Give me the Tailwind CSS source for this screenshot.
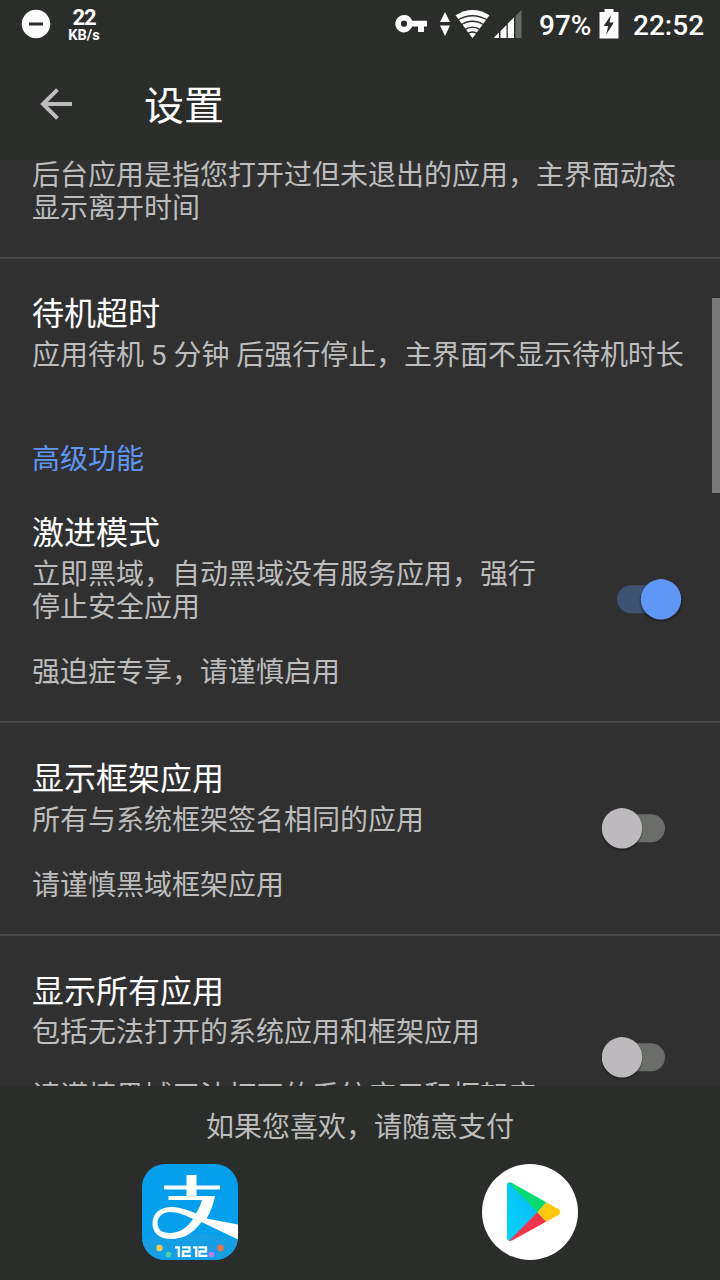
<!DOCTYPE html>
<html lang="zh-CN">
<head>
<meta charset="utf-8">
<title>设置</title>
<script src="https://cdn.jsdelivr.net/npm/@tailwindcss/browser@4"></script>
</head>
<body class="w-[720px] h-[1280px] overflow-hidden bg-[#303030] font-['Roboto','Noto_Sans_CJK_SC',sans-serif] text-white">
<div class="relative flex flex-col w-[720px] h-[1280px] overflow-hidden">
  <header class="h-[160px] shrink-0 bg-[#2b2d2a]">
    <div class="flex h-12 items-center pl-[21px] pr-4">
      <svg class="size-[30px] shrink-0" viewBox="0 0 30 30"><circle cx="15" cy="15" r="14.3" fill="#fff"/><path d="M8 15h14" stroke="#2b2d2a" stroke-width="3"/></svg>
      <div class="ml-[17px] w-8 shrink-0 flex flex-col items-center font-bold pt-[4px]">
        <span class="text-[22px] leading-[19px] tracking-[-1px]">22</span>
        <span class="text-[14.5px] leading-[17px]">KB/s</span>
      </div>
      <svg class="w-[145px] h-12 ml-[294px] shrink-0" viewBox="394 0 145 48" fill="#fff">
        <path fill-rule="evenodd" d="M404 15a8.7 8.7 0 1 0 8.2 11.6H418V32h6v-5.4h3v-5.8h-14.8A8.7 8.7 0 0 0 404 15Zm0 5.6a3.1 3.1 0 1 1 0 6.2 3.1 3.1 0 0 1 0-6.2Z"/>
        <path d="M445 12l5 10h-10zM445 36l5-10.500h-10z"/>
        <path d="M455.500 15.300Q472.500 4.500 489.500 15.300L472.500 38.300Z"/>
        <g fill="none" stroke="#2b2d2a" stroke-width="1.300"><path d="M457 20.500q15.500-9.500 31 0M460 25.500q12.500-8.500 25 0M464 30.300q8.500-6.500 17 0M467 34q5.500-4 11 0"/></g>
        <path d="M494 38v-.5l5-5V38zM500.500 38v-7l6-6v13zM507.800 38V23.500l6.200-6.200V38z"/>
        <path d="M515.500 38V16l6-6v28z" fill="#686a68"/>
      </svg>
      <div class="flex items-center text-[28px] leading-8 font-medium pt-[3px]">
        <span class="w-[60px]">97%</span>
        <svg class="w-5 h-[30px] -mt-[3px] mr-[14px]" viewBox="0 0 20 30"><path d="M5.500 0h9v3H19.500v26.500H.5V3h5z" fill="#fff"/><path d="M12 6L4.700 17h4.600L7 26 14.800 13.500H10.500z" fill="#2b2d2a"/></svg>
        <span class="w-[71px]">22:52</span>
      </div>
    </div>
    <div class="flex h-28 items-center pl-10">
      <svg class="size-8" viewBox="0 0 32 32" fill="none" stroke="#c0bdc0" stroke-width="4"><path d="M32 16H3.500M17.500 1.700L3 16l14.500 14.300"/></svg>
      <h1 class="ml-[72px] pt-[5px] text-[40px] leading-[48px]">设置</h1>
    </div>
  </header>

  <main class="h-[926px] shrink-0 overflow-hidden text-[28px] leading-[32.800px] text-[#bdbdbd]">
    <div class="h-[99px] px-8 border-b-2 border-[#484848]"><p>后台应用是指您打开过但未退出的应用，主界面动态<br>显示离开时间</p></div>
    <section class="h-[147px] px-8 pt-[30px]">
      <h2 class="text-[32px] leading-[50px] text-white">待机超时</h2>
      <p class="pt-px whitespace-nowrap tracking-[-0.03px]">应用待机 5 分钟 后强行停止，主界面不显示待机时长</p>
    </section>
    <h3 class="h-[102px] px-8 pt-[38px] text-[#5e97f6]">高级功能</h3>
    <section class="flex h-[215px] px-8 border-b-2 border-[#484848]">
      <div class="w-[570px] shrink-0">
        <h2 class="text-[32px] leading-[50px] text-white">激进模式</h2>
        <p class="pt-px">立即黑域，自动黑域没有服务应用，强行<br>停止安全应用<br><br>强迫症专享，请谨慎启用</p>
      </div>
      <svg class="w-24 h-[184px] shrink-0" viewBox="0 0.7 96 184"><rect x="15" y="78" width="56" height="28" rx="14" fill="#3e5372"/><circle cx="59" cy="93.500" r="22" fill="#000" fill-opacity=".12"/><circle cx="59" cy="93" r="21" fill="#000" fill-opacity=".15"/><circle cx="59" cy="92" r="20.200" fill="#5e97f6"/></svg>
    </section>
    <section class="flex h-[213px] px-8 pt-[31px] border-b-2 border-[#484848]">
      <div class="w-[570px] shrink-0">
        <h2 class="text-[32px] leading-[50px] text-white">显示框架应用</h2>
        <p class="pt-[0.5px]">所有与系统框架签名相同的应用<br><br>请谨慎黑域框架应用</p>
      </div>
      <svg class="-mt-px w-24 h-[149px] shrink-0" viewBox="0 0.7 96 149"><rect x="7" y="62" width="56" height="28" rx="14" fill="#6b6d6a"/><circle cx="20" cy="78" r="21" fill="#000" fill-opacity=".12"/><circle cx="20" cy="77" r="20.500" fill="#000" fill-opacity=".2"/><circle cx="20" cy="76" r="20.200" fill="#bdbabd"/></svg>
    </section>
    <section class="flex h-[213px] px-8 pt-[31px]">
      <div class="w-[570px] shrink-0">
        <h2 class="text-[32px] leading-[50px] text-white">显示所有应用</h2>
        <p class="leading-8">包括无法打开的系统应用和框架应用<br><br>请谨慎黑域无法打开的系统应用和框架应</p>
      </div>
      <svg class="-mt-px w-24 h-[149px] shrink-0" viewBox="0 -0.3 96 149"><rect x="7" y="77" width="56" height="28" rx="14" fill="#6b6d6a"/><circle cx="20" cy="93" r="21" fill="#000" fill-opacity=".12"/><circle cx="20" cy="92" r="20.500" fill="#000" fill-opacity=".2"/><circle cx="20" cy="91" r="20.200" fill="#bdbabd"/></svg>
    </section>
  </main>

  <footer class="h-[194px] shrink-0 bg-[#2b2d2a] pt-[25px] text-center text-[28px] leading-[33px] text-[#bdbdbd]">
    <p>如果您喜欢，请随意支付</p>
    <div class="mt-[20px] flex justify-between px-[142px]">
      <svg class="size-24" viewBox="0 0 96 96">
        <defs><clipPath id="tile"><rect width="96" height="96" rx="23"/></clipPath></defs>
        <g clip-path="url(#tile)">
          <rect width="96" height="96" fill="#04a0ee"/>
          <path d="M0 76Q48 62 96 76V96H0Z" fill="#149fe4"/>
          <path d="M22 21.500h22.500V11h10v10.500H78v4H54.500v6.500H73q-2.500 13-8.500 22.500L96 60.500v15L59.500 58C50 71 39 75.500 28 75 15 74.500 10 67 10.500 58.500 11 48.500 19 43 30 43c9 .3 17 3.500 24 6.500q4-6 6-13.500H26.500v-4h18v-6.500H22z" fill="#fff"/>
          <path d="M51 55c-7-3.500-15-7-23-7-8 .5-12.500 5-12.500 11 0 7 5 10 12.500 10 9 0 17-5 23-14z" fill="#04a0ee"/>
          <g fill="none" stroke="#fff" stroke-width="2.300"><path d="M33 83.300h3.800V93M40 83.300h7.500v4.200h-6.500v4.400h8M51 83.300h3.300V93M56.500 83.300h7.500v4.200h-6.500v4.400h8"/></g>
          <circle cx="17.500" cy="84" r="3.200" fill="#f2c84b"/><circle cx="26.500" cy="90.500" r="2.800" fill="#4ed3a3"/><circle cx="69.500" cy="90.500" r="2.800" fill="#c37df0"/><circle cx="78.500" cy="84" r="3.400" fill="#e3714d"/>
        </g>
      </svg>
      <svg class="size-24" viewBox="0 0 96 96">
        <defs>
          <linearGradient id="blue" x1="1" y1="0" x2="0" y2="1"><stop offset="0" stop-color="#05b5f5"/><stop offset="1" stop-color="#05dafd"/></linearGradient>
          <clipPath id="play"><path d="M25 21Q25.500 17 30 19L76.500 45Q80 48 76.500 51L30 76.500Q25.500 78 25 74Z"/></clipPath>
        </defs>
        <circle cx="48" cy="48" r="48" fill="#fff"/>
        <g clip-path="url(#play)">
          <path d="M20 10L56 48.300 20 85z" fill="url(#blue)"/>
          <path d="M26 18L55.500 48.300 64.500 38.500 28 16z" fill="#04dc73"/>
          <path d="M26 78L55.500 48.300 64.500 57.500 28 80z" fill="#f5344b"/>
          <path d="M55.500 48.300L64.500 38 84 48 64.500 58.500z" fill="#ffc80b"/>
        </g>
      </svg>
    </div>
  </footer>
  <div class="absolute right-0 top-[298px] w-2 h-[195px] bg-[#7b787b]"></div>
</div>
</body>
</html>
